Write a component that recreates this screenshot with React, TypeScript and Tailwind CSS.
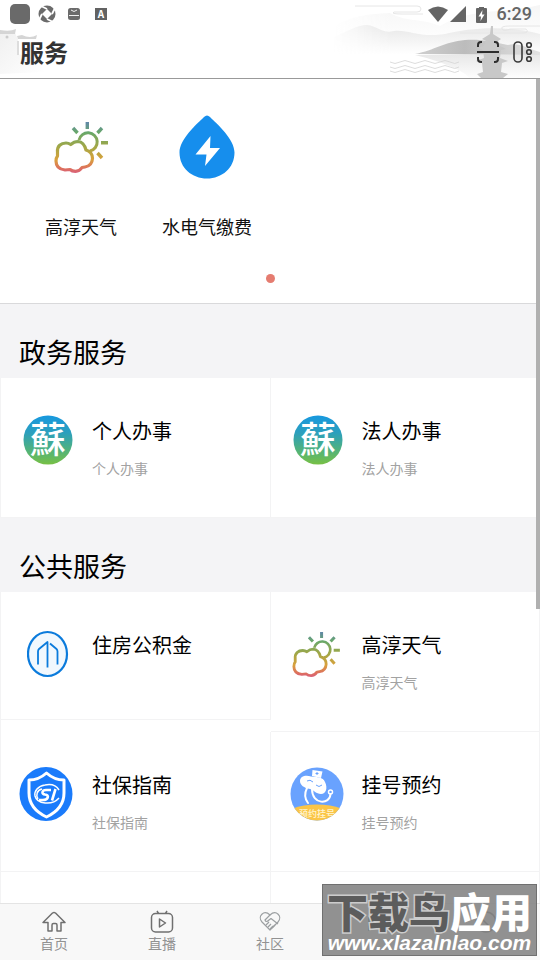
import React from 'react';
import clsx from 'clsx';

interface Service {
  title: string;
  subtitle?: string;
  icon: React.ReactNode;
}

const WeatherIcon = ({ id, className }: { id: string; className: string }) => (
  <svg viewBox="0 0 54 52" className={className} fill="none" stroke={`url(#${id})`}>
    <defs>
      <linearGradient id={id} gradientUnits="userSpaceOnUse" x1="0" y1="0" x2="0" y2="52">
        <stop offset="0" stopColor="#5f83b0" />
        <stop offset="0.22" stopColor="#68a86a" />
        <stop offset="0.5" stopColor="#a3a746" />
        <stop offset="0.74" stopColor="#d9a13c" />
        <stop offset="0.92" stopColor="#dd6e60" />
        <stop offset="1" stopColor="#d8607a" />
      </linearGradient>
    </defs>
    <path
      strokeWidth="3.2"
      strokeLinejoin="round"
      d="M3.500 31C3 25 7 22 12 22Q14.500 22 16.700 23.500Q20 20.500 24 20.500Q30 21 32 29Q38.500 31 38.500 37.500Q38 45 31 46L28 46.500Q25.500 50.400 21.500 50.400Q18 50.400 16 48.500L11 49Q2 48 2 40Q2 37 3.500 35Z"
    />
    <path strokeWidth="3" d="M25 19A9.2 9.2 0 1 1 36 30" />
    <path strokeWidth="3.4" d="M33.300 1V8M19 7L23.500 12M48 7L43.500 12M47 21.700H54M43.500 32L48 37" />
  </svg>
);

const PowerIcon = () => (
  <svg viewBox="0 0 56 64" className="h-16 w-14">
    <path
      fill="#168eed"
      d="M28 0.500C29 0.500 30 1 31 2C38 9 55.500 24 55.500 37.500C55.500 53 43 63.500 28 63.500C13 63.500 0.500 53 0.500 37.500C0.500 24 18 9 25 2C26 1 27 0.500 28 0.500Z"
    />
    <path fill="#fff" d="M31.500 21L16.500 39.500H27.500L26 51L41 33H31Z" />
  </svg>
);

const SuLogo = ({ id }: { id: string }) => (
  <svg viewBox="0 0 50 50" className="h-[50px] w-[50px]">
    <defs>
      <linearGradient id={id} x1="0" y1="0" x2="0" y2="1">
        <stop offset="0" stopColor="#1798df" />
        <stop offset="0.35" stopColor="#2c9fbd" />
        <stop offset="0.7" stopColor="#50b27d" />
        <stop offset="1" stopColor="#78c044" />
      </linearGradient>
    </defs>
    <circle cx="25" cy="25" r="24.500" fill={`url(#${id})`} />
    <text
      x="25"
      y="38"
      textAnchor="middle"
      fill="#fff"
      className="font-['Noto_Sans_CJK_TC',sans-serif] text-[36px] font-medium"
    >
      蘇
    </text>
  </svg>
);

const FundIcon = () => (
  <svg viewBox="0 0 42 48" className="h-12 w-[42px]" fill="none" stroke="#0b7bdc" strokeWidth="1.800">
    <ellipse cx="20.500" cy="24" rx="19.500" ry="22" fill="#f1f8fe" strokeWidth="2.200" />
    <path d="M11 34.500V21.500Q11 20 12 19L20.500 12V37.500M23 13.500L29.500 19Q30.500 20 30.500 21.500V34.500" strokeLinejoin="round" />
  </svg>
);

const SocialIcon = () => (
  <svg viewBox="0 0 54 56" className="mr-1 h-14 w-[54px] shrink-0">
    <ellipse cx="27" cy="28" rx="26.500" ry="27" fill="#1a7bfb" />
    <path
      d="M27.500 7C22 12 16 14 10 14V27C10 38 17 46 27.500 51C38 46 45 38 45 27V14C39 14 33 12 27.500 7Z"
      fill="none"
      stroke="#fff"
      strokeWidth="3"
      strokeLinejoin="round"
    />
    <path d="M40 24C37 19 31 18 26 19C19 20 15 25 16 30C18 38 33 40 40 32" fill="none" stroke="#fff" strokeWidth="1.500" />
    <path
      d="M32 24H27C23 24 22 28 26 28.500C31 29 29 34 24 34H20M36.500 23L33 34.500"
      fill="none"
      stroke="#fff"
      strokeWidth="2.600"
    />
    <path d="M23 23C18 24 16.500 29 19 33" fill="none" stroke="#fff" strokeWidth="1.500" />
  </svg>
);

const BookingIcon = () => (
  <svg viewBox="0 0 54 54" className="mr-0.5 h-[54px] w-[54px] shrink-0">
    <defs>
      <clipPath id="booking">
        <circle cx="27" cy="27" r="26.500" />
      </clipPath>
    </defs>
    <g clipPath="url(#booking)">
      <rect width="54" height="54" fill="#69a2fe" />
      <ellipse cx="27" cy="51" rx="34" ry="13.500" fill="#fbc547" />
      <path d="M22.500 3L32.500 4.500L31 11L22 9Z" fill="#fff" />
      <path
        d="M10 14C10 9 16 7.500 21 9.500C27 10 33 10 35 15C38 21 36 27 31 27C26 27 24 23 20 22C14 21 10 18 10 14Z"
        fill="#fff"
      />
      <path d="M17 14Q20 12 23 15M26 18Q29 21 32 18M27 5V8M25.500 6.500H28.500" fill="none" stroke="#69a2fe" />
      <path d="M17 21C14 27 15 32 18 36M22 22C22 38 40 38 40.500 27" fill="none" stroke="#fff" strokeWidth="2" strokeLinecap="round" />
      <circle cx="40.500" cy="25" r="2" fill="none" stroke="#fff" strokeWidth="1.500" />
      <text x="27" y="50" textAnchor="middle" fill="#fff5d0" className="text-[9px] font-medium">
        预约挂号
      </text>
    </g>
  </svg>
);

const shortcuts: Service[] = [
  { title: '高淳天气', icon: <WeatherIcon id="sky-top" className="h-[52px] w-[54px]" /> },
  { title: '水电气缴费', icon: <PowerIcon /> },
];

const govServices: Service[] = [
  { title: '个人办事', subtitle: '个人办事', icon: <SuLogo id="su-personal" /> },
  { title: '法人办事', subtitle: '法人办事', icon: <SuLogo id="su-legal" /> },
];

const publicServices: Service[] = [
  { title: '住房公积金', icon: <FundIcon /> },
  { title: '高淳天气', subtitle: '高淳天气', icon: <WeatherIcon id="sky-card" className="mr-1 h-[46px] w-12" /> },
  { title: '社保指南', subtitle: '社保指南', icon: <SocialIcon /> },
  { title: '挂号预约', subtitle: '挂号预约', icon: <BookingIcon /> },
];

const tabs = [
  {
    label: '首页',
    icon: <path d="M1 12.500L10.500 3Q12 2 13.500 3L23 12.500H19V21H15V15Q15 13.500 13.500 13.500H11.500Q10 13.500 10 15V21H6V12.500Z" />,
  },
  {
    label: '直播',
    icon: (
      <>
        <rect x="1.500" y="3.500" width="21" height="18.500" rx="4" />
        <path d="M9.500 9V17L15.500 13ZM8.500 3.500L7 1M15.500 3.500L17 1" />
      </>
    ),
  },
  {
    label: '社区',
    icon: (
      <g stroke="#9b9fa1" strokeWidth="1.200">
        <path d="M12 20L4 12C-1 6 6-.5 12 5C18-.5 25 6 20 12L12 20Z" />
        <path d="M12 5L7 10Q8 13 11 10L13 8.500L20 14M8 15L11 12M10 17L13 14M12 19L15 16M14 18L17 15" />
      </g>
    ),
  },
];

const StatusBar = () => (
  <div className="flex h-7 items-center justify-between pr-2 pl-2.5 text-[#656565]">
    <div className="flex items-center">
      <span className="h-5 w-5 rounded-[5px] bg-[#6a6a6a]" />
      <svg viewBox="0 0 18 18" className="ml-2 h-[18px] w-[18px]">
        <circle cx="9" cy="9" r="8.500" fill="#6b6b6b" />
        <path d="M9 4L14 9L9 14L4 9Z" fill="#fff" />
        <path d="M9 4L4 1.500M14 9L16.500 4M9 14L14 16.500M4 9L1.500 14" fill="none" stroke="#fff" strokeWidth="1.800" />
      </svg>
      <svg viewBox="0 0 12 12" className="ml-3 h-3 w-3">
        <rect width="12" height="12" rx="2.500" fill="#6b6b6b" />
        <path d="M3 2Q6 5 9 2M1 7.500H11" fill="none" stroke="#fff" strokeWidth="0.900" />
      </svg>
      <span className="ml-[15px] flex h-3 w-3 items-center justify-center bg-[#626262] text-[10px] leading-3 font-bold text-white">
        A
      </span>
    </div>
    <div className="flex items-center">
      <svg viewBox="0 0 20 16" className="h-4 w-5" fill="#656565">
        <path d="M0 4Q10-3 20 4L10 16Z" />
      </svg>
      <svg viewBox="0 0 16 16" className="ml-0.5 h-4 w-4" fill="#656565">
        <path d="M0 16L16 0V16Z" />
      </svg>
      <svg viewBox="0 0 11 17" className="mr-2.5 ml-2.5 h-[17px] w-[11px]">
        <path d="M3 1H8V2H10Q11 2 11 3V16Q11 17 10 17H1Q0 17 0 16V3Q0 2 1 2H3Z" fill="#656565" />
        <path d="M6.500 4L2.500 10.500H5L4.500 15L8.500 8.500H6Z" fill="#fff" />
      </svg>
      <span className="font-[Roboto,sans-serif] text-lg font-medium">6:29</span>
    </div>
  </div>
);

// Ink-wash landscape behind the title bar
const HeaderScenery = () => (
  <>
    <svg viewBox="0 0 46 78" className="absolute top-0 left-0 h-[78px] w-[46px]">
      <defs>
        <linearGradient id="wall" x1="0" y1="0" x2="1" y2="1">
          <stop offset="0" stopColor="#f0f0f0" />
          <stop offset="1" stopColor="#ffffff" />
        </linearGradient>
      </defs>
      <path d="M0 34L15 33L18 39V54L40 60L44 72L0 74Z" fill="url(#wall)" />
      <path d="M0 30Q10 32 16 29L15 34H0M17 36L22 35Q30 39 37 35L36 39H18Z" fill="#d5d5d5" />
      <path d="M18 41V55" stroke="#ddd" strokeWidth="2" />
      <circle cx="7" cy="37" r="1.500" fill="#ccc" />
    </svg>
    <svg viewBox="0 0 270 78" className="absolute top-0 right-0 h-[78px] w-[270px]">
      <defs>
        <linearGradient id="mist" x1="0" y1="0" x2="0" y2="1">
          <stop offset="0" stopColor="#dedede" />
          <stop offset="1" stopColor="#ffffff" />
        </linearGradient>
        <linearGradient id="fade" x1="0" y1="0" x2="1" y2="0">
          <stop offset="0.22" stopColor="#000000" />
          <stop offset="0.45" stopColor="#ffffff" />
        </linearGradient>
        <mask id="fade-mask" maskUnits="userSpaceOnUse" x="0" y="0" width="270" height="78">
          <rect width="270" height="78" fill="url(#fade)" />
        </mask>
        <linearGradient id="hill" x1="0" y1="0" x2="1" y2="0">
          <stop offset="0" stopColor="#cfcfcf" />
          <stop offset="0.400" stopColor="#bcbcbc" />
          <stop offset="1" stopColor="#e2e2e2" />
        </linearGradient>
        <linearGradient id="water" x1="0" y1="0" x2="0" y2="1">
          <stop offset="0" stopColor="#e8e8e8" />
          <stop offset="1" stopColor="#fdfdfd" />
        </linearGradient>
      </defs>
      <g mask="url(#fade-mask)">
        <path d="M65 26C85 14 105 14 120 13C135 22 150 18 170 26C200 8 230 14 270 5V45H65Z" fill="url(#mist)" opacity="0.300" />
        <path d="M64 37C80 30 87 25 97 25C108 26 112 34 124 31C137 29 150 38 175 34C200 28 235 25 270 34V55H64Z" fill="url(#mist)" opacity="0.700" />
      </g>
      <path d="M145 54C165 50 174 42 195 40C213 39 222 42 238 45C250 42 260 50 270 52V55Z" fill="url(#hill)" />
      <path d="M145 55H270V78H200C190 68 165 60 145 55Z" fill="url(#water)" />
      <path
        d="M85 6H147Q151 6 151 9T147 12H124Q120 14 132 14H153M270 26H240Q230 26 232 29T240 29H256Q260 33 252 33H190"
        fill="none"
        stroke="#e6e6e6"
      />
      <path
        d="M120 62q5 3 10 0t10 0t10 0t10 0t10 0t10 0t9 0M120 67q5 3 10 0t10 0t10 0t10 0t10 0t10 0t9 0M120 71q5 3 10 0t10 0t10 0t10 0t10 0t10 0t9 0"
        fill="none"
        stroke="#d4d4d4"
        strokeWidth="0.800"
      />
      <path
        d="M221 26H223V34L231 39L228 41L230 46L236 49L231 50L230 58L238 61L232 63L231 72L238 74L233 78H211L207 74L213 72L212 63L206 61L214 58L213 50L208 48L214 46L216 41L212 39L220 34Z"
        fill="#c8c8c8"
      />
    </svg>
  </>
);

const ServiceCard = ({ service, short }: { service: Service; short?: boolean }) => (
  <a
    href="#"
    className={clsx(
      'flex items-start gap-[17px] border-r border-b border-[#f3f3f4] bg-white pt-9 pl-5',
      short ? 'h-32' : 'h-[140px]',
    )}
  >
    <span className="flex h-[52px] w-[54px] shrink-0 items-center justify-center">{service.icon}</span>
    <span className="flex flex-col gap-2.5">
      <span className="text-xl leading-[34px] text-black">{service.title}</span>
      {service.subtitle && <span className="text-sm leading-5 text-[#a2a2a2]">{service.subtitle}</span>}
    </span>
  </a>
);

const ServiceSection = ({ title, services }: { title: string; services: Service[] }) => (
  <section>
    <h2 className="bg-[#f4f4f6] px-[19px] pt-7 pb-1.5 text-[27px] leading-10 text-black">{title}</h2>
    <div className="grid grid-cols-2 items-start border-l border-[#f3f3f4] bg-white">
      {services.map((service) => (
        <ServiceCard key={service.title} service={service} short={!service.subtitle} />
      ))}
      {services.length > 2 && (
        <>
          <div className="h-[140px] border-r border-[#f3f3f4]" />
          <div className="h-[140px] border-r border-[#f3f3f4]" />
        </>
      )}
    </div>
  </section>
);

export default function App() {
  return (
    <div className="relative flex h-screen flex-col overflow-hidden bg-white font-['Noto_Sans_CJK_SC',sans-serif]">
      <header className="relative shrink-0 border-b border-[#999]">
        <HeaderScenery />
        <div className="relative">
          <StatusBar />
          <div className="flex h-[50px] items-center justify-between pr-1.5 pb-0.5 pl-5">
            <h1 className="text-2xl font-bold text-[#333]">服务</h1>
            <div className="flex items-center gap-3">
              <button type="button" aria-label="扫一扫">
                <svg viewBox="0 0 24 24" className="h-6 w-6" fill="none" stroke="#2e2e2e" strokeWidth="2">
                  <path d="M2 7V5Q2 2 5 2H6M18 2H19Q22 2 22 5V7M2 17V19Q2 22 5 22H6M18 22H19Q22 22 22 19V17M1 12H23" />
                </svg>
              </button>
              <button type="button" aria-label="更多">
                <svg viewBox="0 0 22 24" className="h-6 w-[22px]" fill="none" stroke="#3a3a3a" strokeWidth="1.600">
                  <rect x="2" y="2" width="8" height="20" rx="4" />
                  <circle cx="17" cy="5" r="2.300" />
                  <circle cx="17" cy="12" r="2.300" />
                  <circle cx="17" cy="19" r="2.300" />
                </svg>
              </button>
            </div>
          </div>
        </div>
      </header>

      <main className="relative min-h-0 flex-1 overflow-hidden">
        <section className="border-b border-[#d9d9db] px-[18px] pt-9 pb-5">
          <div className="grid grid-cols-4">
            {shortcuts.map((item) => (
              <a key={item.title} href="#" className="flex flex-col items-center gap-[31px]">
                <span className="flex h-16 items-center">{item.icon}</span>
                <span className="text-lg leading-8 text-[#111]">{item.title}</span>
              </a>
            ))}
          </div>
          <div className="mx-auto mt-8 h-[9px] w-[9px] rounded-full bg-[#e57c70]" />
        </section>
        <ServiceSection title="政务服务" services={govServices} />
        <ServiceSection title="公共服务" services={publicServices} />
        <div className="absolute top-0 right-0 h-[530px] w-1 bg-[#b0b0b0]" />
      </main>

      <nav className="grid h-[57px] shrink-0 grid-cols-5 border-t border-[#e4e4e4] bg-[#f8f8f8]">
        {tabs.map((tab) => (
          <a key={tab.label} href="#" className="flex flex-col items-center pt-1.5 text-[#929292]">
            <svg viewBox="0 0 24 24" className="h-6 w-6" fill="none" stroke="#707070" strokeWidth="1.500" strokeLinejoin="round">
              {tab.icon}
            </svg>
            <span className="text-sm leading-[18px]">{tab.label}</span>
          </a>
        ))}
        <a href="#" aria-label="服务" className="flex justify-center pt-1.5">
          <svg viewBox="0 0 24 24" className="h-6 w-6" fill="#2f6f68">
            <path d="M2 5L12 9L22 5V21L12 17L2 21Z" />
          </svg>
        </a>
        <a href="#" aria-label="我的" className="flex justify-center pt-1.5">
          <svg viewBox="0 0 24 24" className="h-6 w-6" fill="none" stroke="#505050" strokeWidth="1.500">
            <circle cx="12" cy="12" r="10" />
            <path d="M7 8L16 17" />
          </svg>
        </a>
      </nav>

      <div className="absolute right-[3px] bottom-1 flex h-[72px] w-[215px] flex-col items-center border border-[#707070] bg-[#858585]/90 whitespace-nowrap text-white">
        <span className="text-[41px] leading-[50px] font-black">
          <span className="text-[#5c5c5c] [-webkit-text-stroke:3px_#ccc] [paint-order:stroke_fill]">下载鸟</span>
          应用
        </span>
        <span className="font-['Liberation_Sans',sans-serif] text-[21px] leading-4 font-bold italic">www.xlazalnlao.com</span>
      </div>
    </div>
  );
}
